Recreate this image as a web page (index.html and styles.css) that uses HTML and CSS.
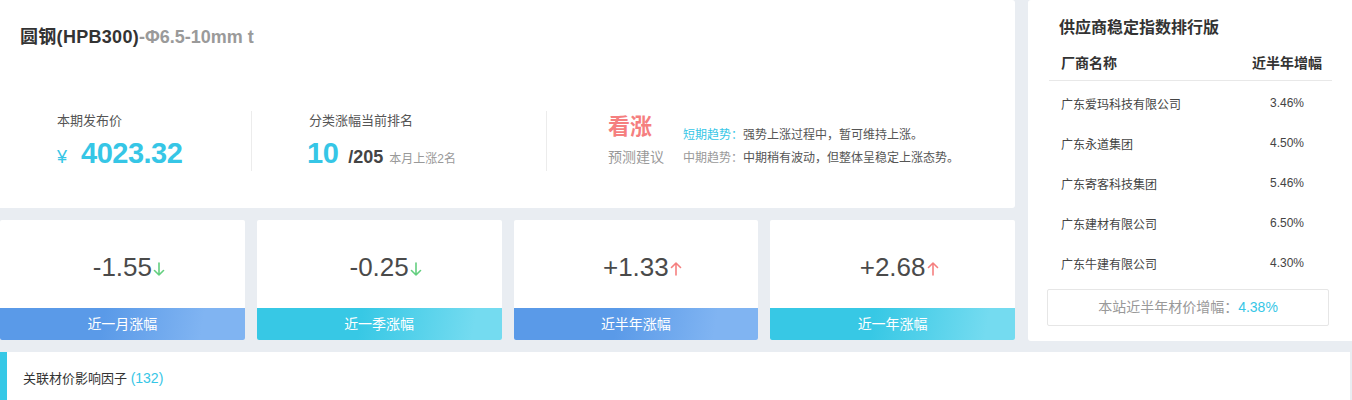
FILE: index.html
```html
<!DOCTYPE html>
<html lang="zh">
<head>
<meta charset="utf-8">
<title>圆钢(HPB300)</title>
<link rel="stylesheet" href="styles.css">
</head>
<body>
<div class="top">
  <div class="left">
    <div class="head-panel">
      <h1 class="title">圆钢(HPB300)<span class="spec">-Φ6.5-10mm t</span></h1>
      <div class="stats">
        <div class="stat stat-price">
          <div class="stat-label">本期发布价</div>
          <div class="stat-value"><span class="yen">¥</span><span class="big">4023.32</span></div>
        </div>
        <div class="stat stat-rank">
          <div class="stat-label">分类涨幅当前排名</div>
          <div class="stat-value"><span class="big">10</span><span class="total">/205</span><span class="note">本月上涨2名</span></div>
        </div>
        <div class="stat stat-forecast">
          <div class="forecast">
            <div class="forecast-main">看涨</div>
            <div class="forecast-sub">预测建议</div>
          </div>
          <div class="trends">
            <div class="trend"><span class="trend-key cyan">短期趋势：</span>强势上涨过程中，暂可维持上涨。</div>
            <div class="trend"><span class="trend-key">中期趋势：</span>中期稍有波动，但整体呈稳定上涨态势。</div>
          </div>
        </div>
      </div>
    </div>
    <div class="cards">
      <div class="card">
        <div class="card-value">-1.55<svg class="arrow down" width="12" height="14" viewBox="0 0 12 14"><path d="M6 1V13M1.5 8.5L6 13L10.5 8.5"/></svg></div>
        <div class="card-bar blue">近一月涨幅</div>
      </div>
      <div class="card">
        <div class="card-value">-0.25<svg class="arrow down" width="12" height="14" viewBox="0 0 12 14"><path d="M6 1V13M1.5 8.5L6 13L10.5 8.5"/></svg></div>
        <div class="card-bar cyanbar">近一季涨幅</div>
      </div>
      <div class="card">
        <div class="card-value">+1.33<svg class="arrow up" width="12" height="14" viewBox="0 0 12 14"><path d="M6 13V1M1.5 5.5L6 1L10.5 5.5"/></svg></div>
        <div class="card-bar blue">近半年涨幅</div>
      </div>
      <div class="card">
        <div class="card-value">+2.68<svg class="arrow up" width="12" height="14" viewBox="0 0 12 14"><path d="M6 13V1M1.5 5.5L6 1L10.5 5.5"/></svg></div>
        <div class="card-bar cyanbar">近一年涨幅</div>
      </div>
    </div>
  </div>
  <div class="right">
    <h2 class="rank-title">供应商稳定指数排行版</h2>
    <div class="rank-table">
      <div class="rank-head"><span class="col-name">厂商名称</span><span class="col-rate">近半年增幅</span></div>
      <div class="rank-row"><span class="col-name">广东爱玛科技有限公司</span><span class="col-rate">3.46%</span></div>
      <div class="rank-row"><span class="col-name">广东永道集团</span><span class="col-rate">4.50%</span></div>
      <div class="rank-row"><span class="col-name">广东寄客科技集团</span><span class="col-rate">5.46%</span></div>
      <div class="rank-row"><span class="col-name">广东建材有限公司</span><span class="col-rate">6.50%</span></div>
      <div class="rank-row"><span class="col-name">广东牛建有限公司</span><span class="col-rate">4.30%</span></div>
    </div>
    <div class="rank-foot">本站近半年材价增幅：<span class="cyan foot-val">4.38%</span></div>
  </div>
</div>
<div class="factor">关联材价影响因子 <span class="cyan factor-count">(132)</span></div>
</body>
</html>
```

FILE: styles.css
```css
* { box-sizing: border-box; }
html, body { margin: 0; padding: 0; }
body {
  background: #e9edf2;
  font-family: "Liberation Sans", "Noto Sans CJK SC", sans-serif;
  color: #333;
  width: 1352px;
  height: 400px;
  overflow: hidden;
}
.cyan { color: #36c6e6; }

.top { display: flex; gap: 13px; }
.left { width: 1015px; display: flex; flex-direction: column; gap: 12px; }

.head-panel {
  height: 208px;
  background: #fff;
  border-radius: 0 3px 3px 0;
  padding: 26px 0 0 20px;
}
.title {
  margin: 0;
  font-size: 18px;
  line-height: 22px;
  font-weight: bold;
  color: #333;
  letter-spacing: 0.3px;
}
.spec { font-size: 18px; color: #9a9a9a; letter-spacing: 0; }

.stats {
  display: flex;
  margin: 63px 0 0 -20px;
  height: 60px;
}
.stat { height: 60px; }
.stat-price { width: 252px; padding-left: 57px; border-right: 1px solid #ececec; }
.stat-rank { width: 295px; padding-left: 57px; border-right: 1px solid #ececec; }
.stat-forecast { flex: 1; padding-left: 61px; display: flex; }

.stat-label { font-size: 13px; line-height: 20px; color: #555; }
.stat-value {
  display: flex;
  align-items: baseline;
  margin-top: 4px;
  line-height: 36px;
  white-space: nowrap;
}
.yen { font-size: 18px; color: #36c6e6; margin-right: 14px; }
.big { font-size: 29px; font-weight: bold; color: #36c6e6; letter-spacing: -0.5px; }
.stat-rank .big { margin-left: -2px; }
.total { font-size: 18px; font-weight: bold; color: #444; margin-left: 10px; }
.note { font-size: 12px; color: #999; margin-left: 6px; }

.forecast { width: 75px; }
.forecast-main { font-size: 22px; line-height: 32px; font-weight: bold; color: #f57f7f; }
.forecast-sub { font-size: 14px; line-height: 20px; margin-top: 4px; color: #999; }
.trends { padding-top: 13px; }
.trend { font-size: 12px; line-height: 23px; color: #555; white-space: nowrap; }
.trend-key { color: #999; }
.trend-key.cyan { color: #36c6e6; }

.cards {
  display: grid;
  grid-template-columns: repeat(4, 1fr);
  gap: 12px;
  height: 120px;
}
.card {
  background: #fff;
  border-radius: 2px;
  overflow: hidden;
  display: flex;
  flex-direction: column;
}
.card-value {
  height: 88px;
  display: flex;
  align-items: baseline;
  justify-content: center;
  padding-top: 32px;
  font-size: 26px;
  line-height: 30px;
  color: #4a4a4a;
}
.arrow {
  fill: none;
  stroke-width: 1.6;
  stroke-linecap: round;
  stroke-linejoin: round;
  margin-left: 1px;
  margin-right: -13px;
}
.arrow.down { stroke: #63cf7f; }
.arrow.up { stroke: #f57f7f; }
.card-bar {
  height: 32px;
  line-height: 32px;
  text-align: center;
  color: #fff;
  font-size: 14px;
}
.card-bar.blue { background: linear-gradient(100deg, #5a9ae8 42%, #80b4f2 82%); }
.card-bar.cyanbar { background: linear-gradient(100deg, #37c8e5 42%, #74dbf0 88%); }

.right {
  width: 324px;
  height: 341px;
  background: #fff;
  border-radius: 3px 0 0 3px;
  padding-top: 17px;
}
.rank-title {
  margin: 0 0 0 31px;
  font-size: 16px;
  line-height: 22px;
  font-weight: bold;
  color: #333;
}
.rank-table { margin: 4px 20px 0 21px; }
.rank-head, .rank-row { display: flex; justify-content: space-between; align-items: center; }
.rank-head {
  height: 38px;
  border-bottom: 1px solid #e8e8e8;
  font-size: 14px;
  font-weight: bold;
  color: #333;
  margin-bottom: 2px;
}
.rank-row { height: 40px; font-size: 12px; color: #444; }
.col-name { padding-left: 12px; }
.col-rate { width: 90px; text-align: center; }
.rank-foot {
  margin: 6px 23px 0 19px;
  height: 37px;
  line-height: 35px;
  border: 1px solid #e6e6e6;
  border-radius: 2px;
  text-align: center;
  font-size: 14px;
  color: #999;
}
.foot-val { font-size: 14px; }

.factor {
  margin-top: 11px;
  width: 1350px;
  height: 60px;
  background: #fff;
  border-left: 7px solid #36c8e6;
  padding: 16px 16px;
  font-size: 13px;
  line-height: 20px;
  color: #333;
}
.factor-count { font-size: 14px; }
```
